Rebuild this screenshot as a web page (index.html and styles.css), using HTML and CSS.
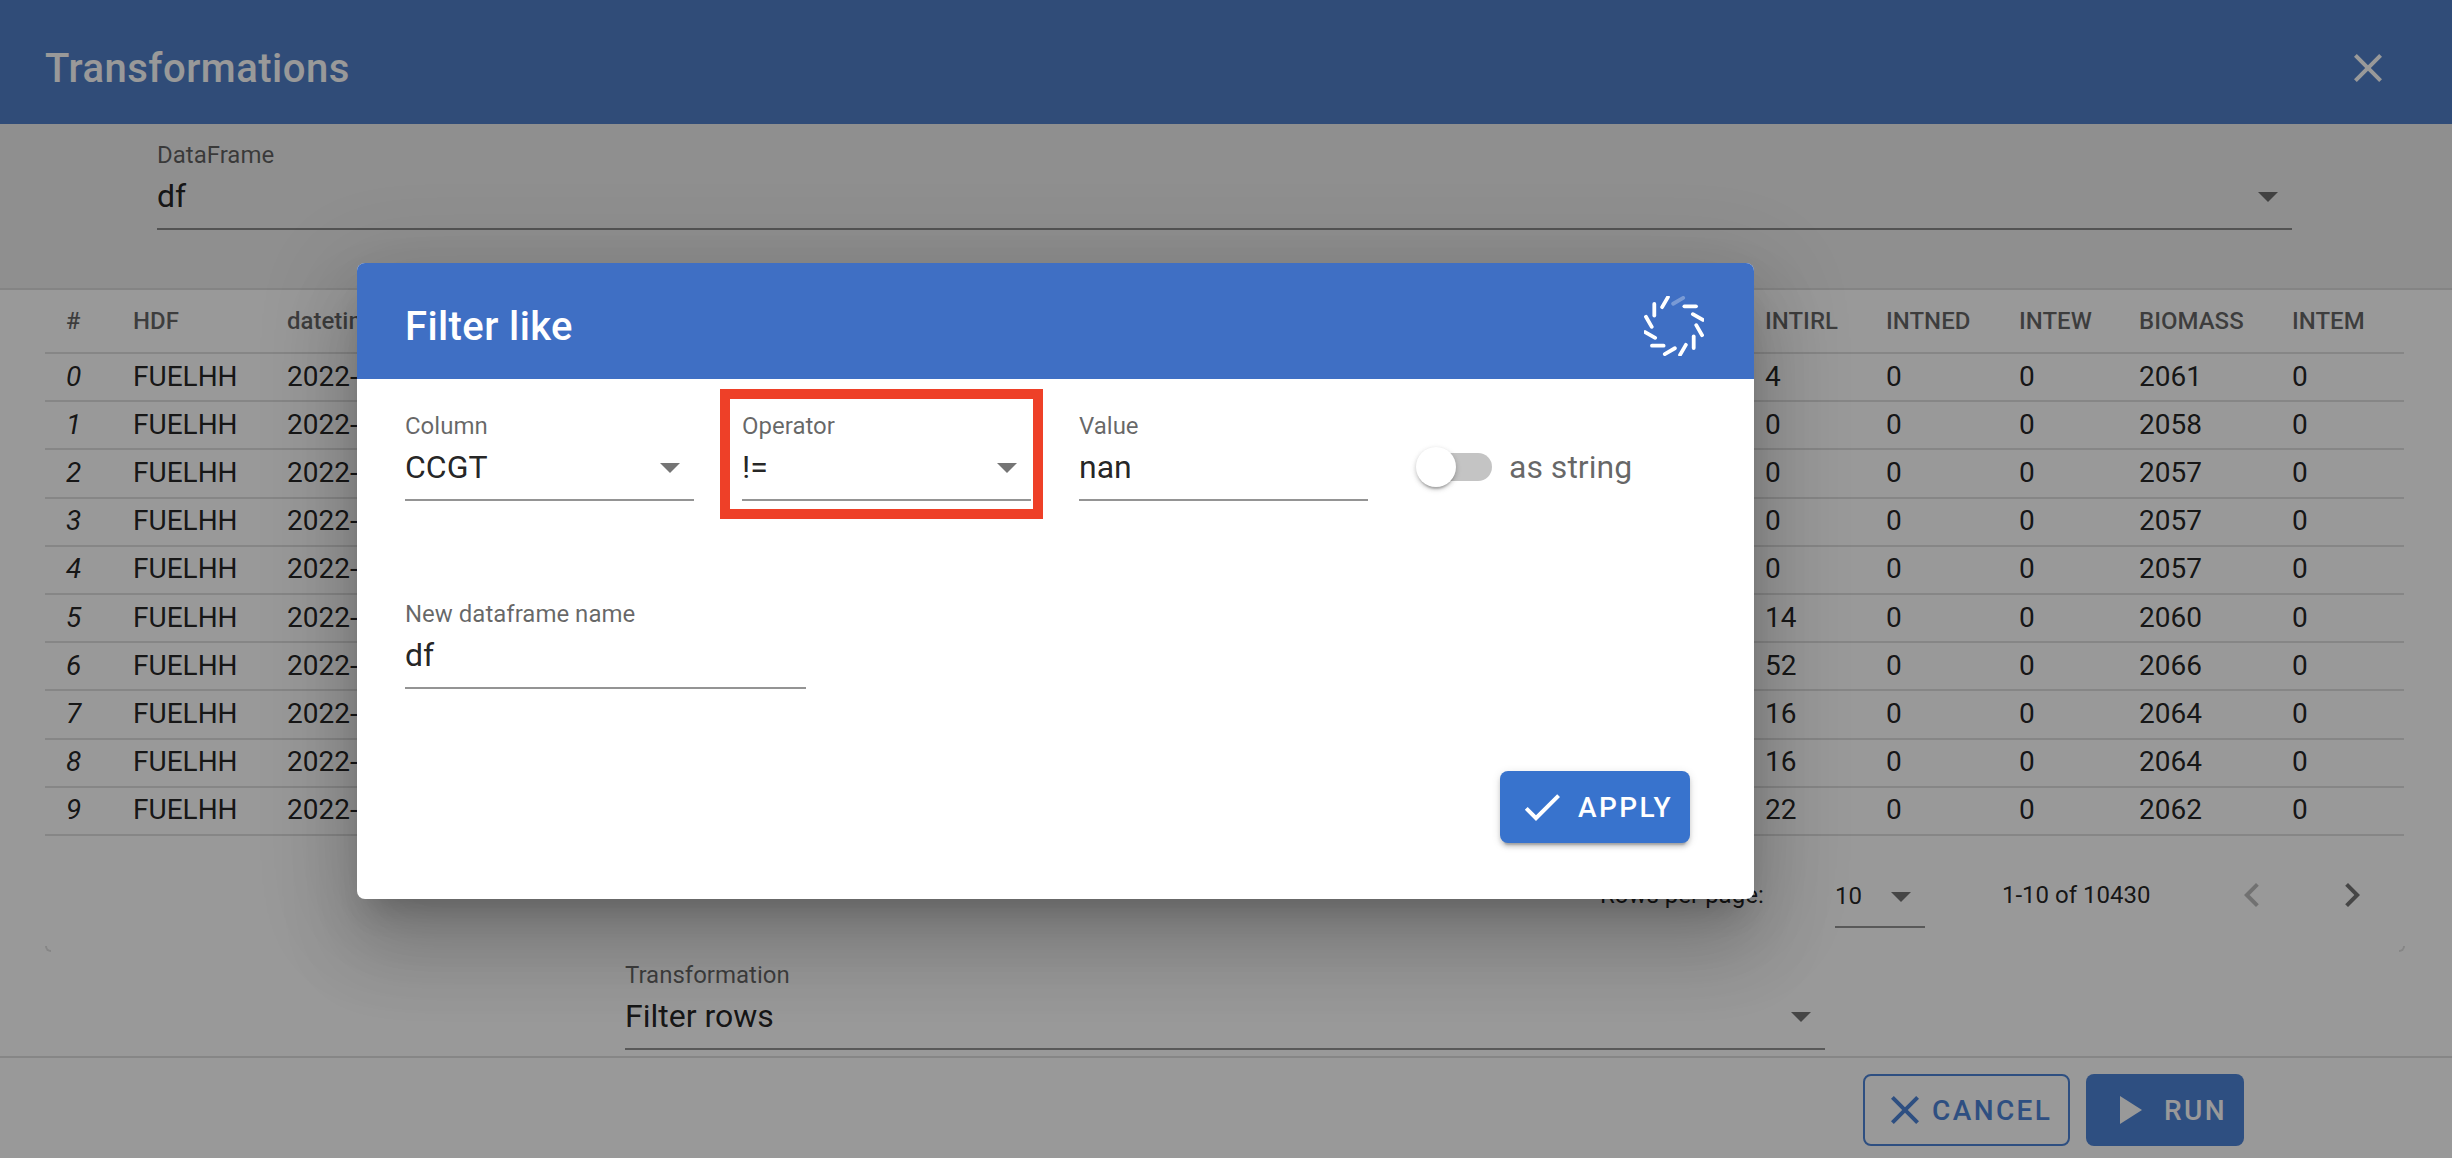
FILE: index.html
```html
<!DOCTYPE html>
<html lang="en">
<head>
    <meta charset="UTF-8">
    <title>Transformations</title>
    <link rel="stylesheet" href="styles.css">
</head>
<body>
    <svg class="icon-defs" aria-hidden="true">
        <symbol id="i-arrow" viewBox="0 0 24 24"><path d="M7 10l5 5 5-5z"/></symbol>
        <symbol id="i-close" viewBox="0 0 24 24"><path d="M19 6.41L17.59 5 12 10.59 6.41 5 5 6.41 10.59 12 5 17.59 6.41 19 12 13.41 17.59 19 19 17.59 13.41 12z"/></symbol>
        <symbol id="i-check" viewBox="0 0 24 24"><path d="M9 16.17L4.83 12l-1.42 1.41L9 19 21 7l-1.41-1.41z"/></symbol>
        <symbol id="i-play" viewBox="0 0 24 24"><path d="M8 5v14l11-7z"/></symbol>
        <symbol id="i-prev" viewBox="0 0 24 24"><path d="M15.41 7.41L14 6l-6 6 6 6 1.41-1.41L10.83 12z"/></symbol>
        <symbol id="i-next" viewBox="0 0 24 24"><path d="M10 6L8.59 7.41 13.17 12l-4.58 4.59L10 18l6-6z"/></symbol>
    </svg>

    <div class="page">
        <header class="appbar">
            <h1>Transformations</h1>
            <svg class="icon"><use href="#i-close"/></svg>
        </header>

        <section class="top">
            <div class="field">
                <label>DataFrame</label>
                <div class="value">df<svg class="icon arrow"><use href="#i-arrow"/></svg></div>
            </div>
        </section>

        <section class="card">
            <table class="grid">
                <colgroup>
                    <col class="c-idx"><col class="c-hdf"><col class="c-date"><col class="c-irl"><col class="c-ned"><col class="c-ew"><col class="c-bio"><col class="c-em">
                </colgroup>
                <thead>
                    <tr><th>#</th><th>HDF</th><th>datetime</th><th>INTIRL</th><th>INTNED</th><th>INTEW</th><th>BIOMASS</th><th>INTEM</th></tr>
                </thead>
                <tbody>
                    <tr><td>0</td><td>FUELHH</td><td>2022-</td><td>4</td><td>0</td><td>0</td><td>2061</td><td>0</td></tr>
                    <tr><td>1</td><td>FUELHH</td><td>2022-</td><td>0</td><td>0</td><td>0</td><td>2058</td><td>0</td></tr>
                    <tr><td>2</td><td>FUELHH</td><td>2022-</td><td>0</td><td>0</td><td>0</td><td>2057</td><td>0</td></tr>
                    <tr><td>3</td><td>FUELHH</td><td>2022-</td><td>0</td><td>0</td><td>0</td><td>2057</td><td>0</td></tr>
                    <tr><td>4</td><td>FUELHH</td><td>2022-</td><td>0</td><td>0</td><td>0</td><td>2057</td><td>0</td></tr>
                    <tr><td>5</td><td>FUELHH</td><td>2022-</td><td>14</td><td>0</td><td>0</td><td>2060</td><td>0</td></tr>
                    <tr><td>6</td><td>FUELHH</td><td>2022-</td><td>52</td><td>0</td><td>0</td><td>2066</td><td>0</td></tr>
                    <tr><td>7</td><td>FUELHH</td><td>2022-</td><td>16</td><td>0</td><td>0</td><td>2064</td><td>0</td></tr>
                    <tr><td>8</td><td>FUELHH</td><td>2022-</td><td>16</td><td>0</td><td>0</td><td>2064</td><td>0</td></tr>
                    <tr><td>9</td><td>FUELHH</td><td>2022-</td><td>22</td><td>0</td><td>0</td><td>2062</td><td>0</td></tr>
                </tbody>
            </table>
            <div class="pager">
                <span class="rows-label">Rows per page:</span>
                <div class="rows-select">10<svg class="icon arrow"><use href="#i-arrow"/></svg></div>
                <span class="range">1-10 of 10430</span>
                <svg class="icon chev off"><use href="#i-prev"/></svg>
                <svg class="icon chev"><use href="#i-next"/></svg>
            </div>
            <span class="corner corner-left"></span>
            <span class="corner corner-right"></span>
        </section>

        <section class="transform">
            <div class="field">
                <label>Transformation</label>
                <div class="value">Filter rows<svg class="icon arrow"><use href="#i-arrow"/></svg></div>
            </div>
        </section>

        <footer class="actions">
            <button class="btn btn-outline"><svg class="icon"><use href="#i-close"/></svg>CANCEL</button>
            <button class="btn btn-run"><svg class="icon"><use href="#i-play"/></svg>RUN</button>
        </footer>
    </div>

    <div class="backdrop"></div>

    <div class="modal">
        <div class="modal-head">
            <h2>Filter like</h2>
            <svg class="spinner" viewBox="-30 -30 60 60">
                <g class="dashes">
                    <line x1="10.4" y1="-19.7" x2="22" y2="-19.7" transform="rotate(-30)" class="faded"/>
                    <line x1="10.4" y1="-19.7" x2="22" y2="-19.7" transform="rotate(-60)"/>
                    <line x1="10.4" y1="-19.7" x2="22" y2="-19.7" transform="rotate(-90)"/>
                    <line x1="10.4" y1="-19.7" x2="22" y2="-19.7" transform="rotate(-120)"/>
                    <line x1="10.4" y1="-19.7" x2="22" y2="-19.7" transform="rotate(-150)"/>
                    <line x1="10.4" y1="-19.7" x2="22" y2="-19.7" transform="rotate(180)"/>
                    <line x1="10.4" y1="-19.7" x2="22" y2="-19.7" transform="rotate(150)"/>
                    <line x1="10.4" y1="-19.7" x2="22" y2="-19.7" transform="rotate(120)"/>
                    <line x1="10.4" y1="-19.7" x2="22" y2="-19.7" transform="rotate(90)"/>
                    <line x1="10.4" y1="-19.7" x2="22" y2="-19.7" transform="rotate(60)"/>
                    <line x1="10.4" y1="-19.7" x2="22" y2="-19.7" transform="rotate(30)"/>
                    <line x1="10.4" y1="-19.7" x2="22" y2="-19.7"/>
                </g>
            </svg>
        </div>
        <div class="modal-body">
            <div class="form-row">
                <div class="field">
                    <label>Column</label>
                    <div class="value">CCGT<svg class="icon arrow"><use href="#i-arrow"/></svg></div>
                </div>
                <div class="field marked">
                    <label>Operator</label>
                    <div class="value">!=<svg class="icon arrow"><use href="#i-arrow"/></svg></div>
                </div>
                <div class="field">
                    <label>Value</label>
                    <div class="value">nan</div>
                </div>
                <div class="switch">
                    <span class="track"></span>
                    <span class="thumb"></span>
                    <span class="switch-label">as string</span>
                </div>
            </div>
            <div class="field field-name">
                <label>New dataframe name</label>
                <div class="value">df</div>
            </div>
            <div class="modal-actions">
                <button class="btn btn-apply"><svg class="icon"><use href="#i-check"/></svg>APPLY</button>
            </div>
        </div>
    </div>
</body>
</html>
```

FILE: styles.css
```css
*, *::after {
    box-sizing: border-box;
}

body {
    margin: 0;
    width: 2452px;
    height: 1158px;
    overflow: hidden;
    position: relative;
    background: #fff;
    font-family: Roboto, "Noto Sans", sans-serif;
    color: rgba(0, 0, 0, 0.87);
}

.icon-defs {
    display: none;
}

.icon {
    width: 48px;
    height: 48px;
    fill: currentColor;
    flex: none;
}

/* page under the backdrop */
.page {
    display: flex;
    flex-direction: column;
    height: 1158px;
}

.appbar {
    height: 124px;
    background: #507fc8;
    color: #fff;
    display: flex;
    align-items: center;
    justify-content: space-between;
    padding: 12px 60px 0 45px;
}

.appbar h1 {
    margin: 0;
    font-size: 40px;
    font-weight: 500;
    letter-spacing: 0.5px;
}

.top {
    height: 166px;
    padding: 17px 160px 0 157px;
    background: #eeeeee;
    border-bottom: 2px solid #dcdcdc;
}

.field {
    position: relative;
}

.field label {
    display: block;
    font-size: 24px;
    line-height: 28px;
    color: rgba(0, 0, 0, 0.6);
}

.field .value {
    position: relative;
    height: 61px;
    padding-top: 7px;
    font-size: 32px;
    line-height: 40px;
    border-bottom: 2px solid rgba(0, 0, 0, 0.42);
}

.arrow {
    color: rgba(0, 0, 0, 0.54);
    position: absolute;
    right: 0;
    top: 3px;
}

/* table card */
.card {
    margin-left: 45px;
    width: 2360px;
    height: 662px;
    position: relative;
}

.corner {
    position: absolute;
    bottom: 0;
    width: 6px;
    height: 6px;
    border-bottom: 2px solid #dfdfdf;
}

.corner-left {
    left: 0;
    border-left: 2px solid #dfdfdf;
    border-bottom-left-radius: 6px;
}

.corner-right {
    right: 0;
    border-right: 2px solid #dfdfdf;
    border-bottom-right-radius: 6px;
}

.grid {
    width: 2359px;
    table-layout: fixed;
    border-collapse: separate;
    border-spacing: 0;
}

.c-idx { width: 88px; }
.c-hdf { width: 154px; }
.c-date { width: 1478px; }
.c-irl { width: 121px; }
.c-ned { width: 133px; }
.c-ew { width: 120px; }
.c-bio { width: 153px; }
.c-em { width: 112px; }

.grid th,
.grid td {
    padding: 0;
    text-align: left;
    white-space: nowrap;
    border-bottom: 2px solid #dfdfdf;
}

.grid th {
    height: 64px;
    font-size: 24px;
    font-weight: 500;
    color: rgba(0, 0, 0, 0.6);
}

.grid td {
    height: 48.2px;
    padding-bottom: 2px;
    font-size: 28px;
}

.grid th:first-child,
.grid td:first-child {
    padding-left: 21px;
}

.grid td:first-child {
    font-style: italic;
}

.pager {
    display: flex;
    align-items: center;
    height: 90px;
    padding: 28px 0 0 1555px;
    font-size: 24px;
}

.pager > * {
    flex: none;
}

.rows-label {
    width: 235px;
}

.rows-select {
    position: relative;
    width: 90px;
    height: 50px;
    margin-top: 16px;
    padding-top: 4px;
    line-height: 28px;
    border-bottom: 2px solid rgba(0, 0, 0, 0.42);
}

.rows-select .arrow {
    right: 0;
    top: -6px;
}

.range {
    margin-left: 77px;
    width: 226px;
}

.chev {
    color: rgba(0, 0, 0, 0.54);
    margin-right: 52px;
}

.chev.off {
    color: rgba(0, 0, 0, 0.26);
}

.transform {
    margin-top: 9px;
    padding-left: 625px;
    width: 1825px;
}

.actions {
    margin-top: 6px;
    flex: 1;
    border-top: 2px solid #dfdfdf;
    padding: 16px 208px 0 0;
    display: flex;
    justify-content: flex-end;
    align-items: flex-start;
    gap: 16px;
}

.btn {
    height: 72px;
    border-radius: 8px;
    border: none;
    display: flex;
    align-items: center;
    font-family: inherit;
    font-size: 28px;
    font-weight: 500;
    letter-spacing: 2.4px;
    padding: 0;
}

.btn-outline {
    width: 207px;
    padding-left: 16px;
    gap: 3px;
    background: none;
    border: 2px solid #4d84d8;
    color: #4d84d8;
}

.btn-run {
    width: 158px;
    padding-left: 18px;
    gap: 12px;
    background: #4d84d8;
    color: #fff;
}

.btn-apply {
    width: 190px;
    padding-left: 18px;
    gap: 12px;
    background: #3873cd;
    color: #fff;
    box-shadow: 0 6px 2px -4px rgba(0, 0, 0, 0.2), 0 4px 4px rgba(0, 0, 0, 0.14), 0 2px 10px rgba(0, 0, 0, 0.12);
}

.backdrop {
    position: absolute;
    inset: 0;
    background: rgba(0, 0, 0, 0.4);
}

/* dialog */
.modal {
    position: absolute;
    left: 357px;
    top: 263px;
    width: 1397px;
    height: 636px;
    background: #fff;
    border-radius: 8px;
    overflow: hidden;
    box-shadow: 0 22px 30px -14px rgba(0, 0, 0, 0.2), 0 48px 76px 6px rgba(0, 0, 0, 0.14), 0 18px 92px 16px rgba(0, 0, 0, 0.12);
}

.modal-head {
    height: 116px;
    background: #3f6fc4;
    color: #fff;
    display: flex;
    align-items: center;
    justify-content: space-between;
    padding: 10px 50px 0 48px;
}

.modal-head h2 {
    margin: 0;
    font-size: 40px;
    font-weight: 500;
    letter-spacing: 0.4px;
}

.spinner {
    width: 60px;
    height: 60px;
}

.dashes line {
    stroke: #fff;
    stroke-width: 3.8;
    stroke-linecap: round;
}

.dashes .faded {
    opacity: 0.3;
}

.modal-body {
    padding: 33px 64px 0 48px;
}

.form-row {
    display: flex;
    gap: 48px;
}

.form-row .field {
    width: 289px;
}

/* red marker round the operator field */
.marked::after {
    content: "";
    position: absolute;
    left: -22px;
    top: -23px;
    width: 323px;
    height: 130px;
    border: 10px solid #ee4028;
}

.switch {
    display: flex;
    align-items: center;
    height: 40px;
    margin-top: 35px;
}

.track {
    width: 68px;
    height: 28px;
    margin-left: 8px;
    margin-right: -76px;
    border-radius: 14px;
    background: #c4c4c4;
}

.thumb {
    width: 40px;
    height: 40px;
    border-radius: 50%;
    background: #fff;
    position: relative;
    box-shadow: 0 4px 2px -2px rgba(0, 0, 0, 0.2), 0 2px 4px rgba(0, 0, 0, 0.14), 0 2px 6px rgba(0, 0, 0, 0.12);
}

.switch-label {
    margin-left: 53px;
    font-size: 32px;
    color: rgba(0, 0, 0, 0.6);
}

.field-name {
    width: 401px;
    margin-top: 99px;
}

.modal-actions {
    display: flex;
    justify-content: flex-end;
    margin-top: 82px;
}
```
